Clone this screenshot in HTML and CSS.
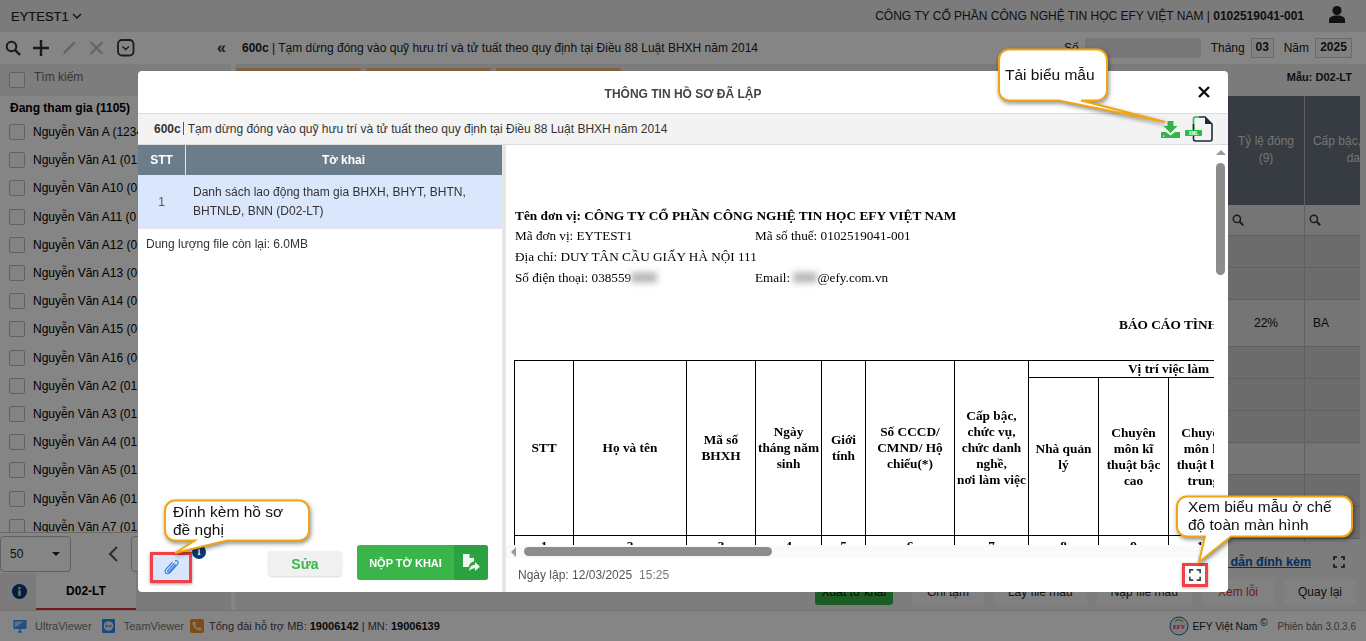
FILE: index.html
```html
<!DOCTYPE html>
<html lang="vi">
<head>
<meta charset="utf-8">
<title>Thông tin hồ sơ đã lập</title>
<link rel="stylesheet" href="styles.css">
</head>
<body>
<div class="app">
  <header class="topbar">
    <div class="unit">EYTEST1
      <svg class="chev" width="10" height="6" viewBox="0 0 10 6"><path d="M1 1l4 4 4-4" fill="none" stroke="#222" stroke-width="1.4"/></svg>
    </div>
    <div class="company">CÔNG TY CỔ PHẦN CÔNG NGHỆ TIN HỌC EFY VIỆT NAM | <b>0102519041-001</b></div>
    <svg class="user" width="16" height="17" viewBox="0 0 16 17"><circle cx="8" cy="4.5" r="4.5" fill="#222"/><path d="M0 17v-3c0-3 3-4.500 8-4.500s8 1.500 8 4.500v3z" fill="#222"/></svg>
  </header>

  <div class="workspace">
    <aside class="sidebar">
      <div class="tools">
        <svg width="16" height="16" viewBox="0 0 16 16"><circle cx="6.500" cy="6.500" r="4.800" fill="none" stroke="#333" stroke-width="2"/><path d="M10 10l5 5" stroke="#333" stroke-width="2.400"/></svg>
        <svg width="16" height="16" viewBox="0 0 16 16"><path d="M8 0v16M0 8h16" stroke="#333" stroke-width="2.400"/></svg>
        <svg width="16" height="16" viewBox="0 0 16 16"><path d="M2 15l1-3.500L13 1.500l1.500 1.500L4.500 13z" fill="#bcbcbc"/></svg>
        <svg width="16" height="16" viewBox="0 0 16 16"><path d="M1.500 2l12 12M13.500 2l-12 12" stroke="#bcbcbc" stroke-width="2"/></svg>
        <svg width="18" height="18" viewBox="0 0 18 18"><rect x="1" y="1" width="15.500" height="15.500" rx="4" fill="none" stroke="#333" stroke-width="1.800"/><path d="M5.500 7.500l3.200 3 3.200-3" fill="none" stroke="#333" stroke-width="1.600"/></svg>
        <span class="collapse">«</span>
      </div>
      <div class="search"><span class="check"></span><span class="search-label">Tìm kiếm</span></div>
      <div class="group">Đang tham gia (1105)</div>
      <ul class="people">
        <li><span class="check"></span>Nguyễn Văn A (1234</li>
        <li><span class="check"></span>Nguyễn Văn A1 (01</li>
        <li><span class="check"></span>Nguyễn Văn A10 (0</li>
        <li><span class="check"></span>Nguyễn Văn A11 (0</li>
        <li><span class="check"></span>Nguyễn Văn A12 (0</li>
        <li><span class="check"></span>Nguyễn Văn A13 (0</li>
        <li><span class="check"></span>Nguyễn Văn A14 (0</li>
        <li><span class="check"></span>Nguyễn Văn A15 (0</li>
        <li><span class="check"></span>Nguyễn Văn A16 (0</li>
        <li><span class="check"></span>Nguyễn Văn A2 (01</li>
        <li><span class="check"></span>Nguyễn Văn A3 (01</li>
        <li><span class="check"></span>Nguyễn Văn A4 (01</li>
        <li><span class="check"></span>Nguyễn Văn A5 (01</li>
        <li><span class="check"></span>Nguyễn Văn A6 (01</li>
        <li><span class="check"></span>Nguyễn Văn A7 (01</li>
      </ul>
      <div class="pager">
        <div class="page-size">50<i class="caret"></i></div>
        <svg class="page-prev" width="10" height="16" viewBox="0 0 10 16"><path d="M9 1L2 8l7 7" fill="none" stroke="#555" stroke-width="2"/></svg>
        <div class="page-box"></div>
      </div>
      <div class="side-tabs">
        <svg class="tab-info" width="15" height="15" viewBox="0 0 15 15"><circle cx="7.500" cy="7.500" r="7.500" fill="#0b3a78"/><rect x="6.300" y="6.300" width="2.400" height="5.500" fill="#ddd"/><rect x="6.300" y="3" width="2.400" height="2.200" fill="#ddd"/></svg>
        <div class="tab-active">D02-LT</div>
      </div>
    </aside>

    <main class="content">
      <div class="headline">
        <div class="headline-title"><b>600c</b> | Tạm dừng đóng vào quỹ hưu trí và tử tuất theo quy định tại Điều 88 Luật BHXH năm 2014</div>
        <label class="field-label">Số</label><span class="field-wide"></span>
        <label class="field-label gap">Tháng</label><span class="field-box month">03</span>
        <label class="field-label gap">Năm</label><span class="field-box year">2025</span>
      </div>
      <div class="chips">
        <span class="chip"></span><span class="chip"></span><span class="chip"></span>
        <b class="form-name">Mẫu: D02-LT</b>
      </div>
      <div class="grid-area">
        <div class="grid-spacer"></div>
        <div class="grid-col">
          <div class="grid-head">Tỷ lệ đóng<br>(9)</div>
          <div class="grid-filter"><svg width="12" height="12" viewBox="0 0 16 16"><circle cx="6.500" cy="6.500" r="4.800" fill="none" stroke="#333" stroke-width="2"/><path d="M10 10l5 5" stroke="#333" stroke-width="2.400"/></svg></div>
          <div class="grid-row"></div>
          <div class="grid-row"></div>
          <div class="grid-row tall">22%</div>
          <div class="grid-row"></div>
          <div class="grid-row"></div>
          <div class="grid-row"></div>
          <div class="grid-row light"></div>
          <div class="grid-row"></div>
          <div class="grid-row"></div>
        </div>
        <div class="grid-col wide">
          <div class="grid-head"><span class="head-wide">Cấp bậc, chức vụ<br>danh</span></div>
          <div class="grid-filter"><svg width="12" height="12" viewBox="0 0 16 16"><circle cx="6.500" cy="6.500" r="4.800" fill="none" stroke="#333" stroke-width="2"/><path d="M10 10l5 5" stroke="#333" stroke-width="2.400"/></svg></div>
          <div class="grid-row"></div>
          <div class="grid-row"></div>
          <div class="grid-row tall left">BA</div>
          <div class="grid-row"></div>
          <div class="grid-row"></div>
          <div class="grid-row"></div>
          <div class="grid-row light"></div>
          <div class="grid-row"></div>
          <div class="grid-row"></div>
        </div>
        <div class="grid-strip"></div>
      </div>
      <div class="attach-row">
        <a class="attach-link">Hướng dẫn đính kèm</a>
        <svg class="fs-mini" width="12" height="12" viewBox="0 0 12 12"><path d="M1 4V1h3M8 1h3v3M11 8v3H8M4 11H1V8" fill="none" stroke="#222" stroke-width="1.600"/></svg>
      </div>
      <div class="actions">
        <button class="act green">Xuất tờ khai</button>
        <button class="act">Ghi tạm</button>
        <button class="act">Lấy file mẫu</button>
        <button class="act">Nạp file mẫu</button>
        <button class="act red">Xem lỗi</button>
        <button class="act">Quay lại</button>
      </div>
    </main>
  </div>

  <footer class="statusbar">
    <svg width="14" height="14" viewBox="0 0 14 14"><rect x="0.500" y="1" width="13" height="9" fill="#3a9aff"/><path d="M2 8.500L11 2.500H2z" fill="#bcd8f8"/><path d="M5 13h4M7 10v3" stroke="#3a9aff" stroke-width="1.500"/></svg>
    <span class="st-a">UltraViewer</span>
    <svg width="13" height="14" viewBox="0 0 13 14"><rect width="13" height="14" rx="1" fill="#2f8cf0"/><circle cx="6.500" cy="7" r="4.800" fill="#eee"/><path d="M3 7l1.800-1.500v1h3.400v-1L10 7 8.200 8.500v-1H4.800v1z" fill="#2f8cf0"/></svg>
    <span class="st-b">TeamViewer</span>
    <svg width="14" height="14" viewBox="0 0 14 14"><rect width="14" height="14" rx="2" fill="#f59028"/><path d="M3.500 2.500l2 .5.500 2.500-1 1c.7 1.300 1.500 2 2.700 2.700l1-1 2.300.6.500 1.900c-1 1-2.500 1-4 .2C5 9.600 3.600 8.200 2.800 6 2.300 4.600 2.600 3.300 3.500 2.500z" fill="#f5eee0"/></svg>
    <span class="st-2">Tổng đài hỗ trợ MB: <b>19006142</b> | MN: <b>19006139</b></span>
    <span class="st-right">
      <svg width="20" height="20" viewBox="0 0 20 20"><circle cx="10" cy="10" r="9" fill="#eee" stroke="#1f5fb0" stroke-width="1"/><path d="M6 5.500c2.500-2 5.500-2 8 0" fill="none" stroke="#40b050" stroke-width="1.200"/><text x="10" y="12.500" text-anchor="middle" class="efy-mark">EFY</text></svg>
      <span class="efy-name">EFY Việt Nam <sup>©</sup></span>
      <span class="version">Phiên bản 3.0.3.6</span>
    </span>
  </footer>
</div>

<div class="overlay"></div>

<section class="modal">
  <div class="modal-title">THÔNG TIN HỒ SƠ ĐÃ LẬP
    <svg class="close" width="12" height="12" viewBox="0 0 12 12"><path d="M1 1l10 10M11 1L1 11" stroke="#111" stroke-width="2.400"/></svg>
  </div>
  <div class="modal-sub">
    <span class="sub-text"><b>600c</b><i class="sub-sep"></i>Tạm dừng đóng vào quỹ hưu trí và tử tuất theo quy định tại Điều 88 Luật BHXH năm 2014</span>
    <svg class="dl" width="19" height="17" viewBox="0 0 19 17"><path d="M6.500 0h6v5h4l-7 7-7-7h4z" fill="#37b34a"/><path d="M0 11h5L9.500 14.500 14 11h5V17H0z" fill="#37b34a"/><rect x="2" y="14.500" width="1.500" height="1.200" fill="#dff"/></svg>
    <svg class="xml" width="28" height="28" viewBox="0 0 28 28"><path d="M14 2h6l7 7v15a2 2 0 0 1-2 2H10.500a2 2 0 0 1-2-2v-3" fill="none" stroke="#1e2a3a" stroke-width="1.600"/><path d="M20 2v7h7z" fill="#1e2a3a"/><path d="M8.500 15V3.500a1.500 1.500 0 0 1 1.500-1.500h4" fill="none" stroke="#37b34a" stroke-width="1.600"/><path d="M8.500 9v6" stroke="#1e2a3a" stroke-width="1.600"/><rect x="0" y="15" width="17" height="6" rx="1" fill="#20c040"/><text x="8.500" y="20" text-anchor="middle" class="xml-mark">XML</text></svg>
  </div>
  <div class="modal-body">
    <div class="left-pane">
      <div class="list-head"><div class="h-stt">STT</div><div class="h-form">Tờ khai</div></div>
      <div class="list-row"><div class="r-stt">1</div><div class="r-form">Danh sách lao động tham gia BHXH, BHYT, BHTN, BHTNLĐ, BNN (D02-LT)</div></div>
      <div class="quota">Dung lượng file còn lại: 6.0MB</div>
      <div class="left-foot">
        <button class="clip">
          <svg width="17" height="17" viewBox="0 0 18 18"><path d="M12.500 2.500c1.300-1.200 3-.8 3.400.5.400 1 0 2.100-.8 3l-7.300 7.800c-1.700 1.800-3.600 2.200-4.800 1.200-1.200-1.100-.8-3 .7-4.700l6.300-6.900M12 4.500l-6.500 7.200c-.7.800-.8 1.500-.4 1.900.5.400 1.200.1 1.900-.6l6.500-7.200" fill="none" stroke="#2f7be8" stroke-width="1.200"/></svg>
        </button>
        <span class="badge">1</span>
        <button class="edit">Sửa</button>
        <button class="submit"><span class="submit-text">NỘP TỜ KHAI</span><span class="submit-icon">
          <svg width="18" height="19" viewBox="0 0 18 19"><path d="M1 1h6.500L12 5v3.500c-2.700.3-4.500 2-5.200 5.500H1z" fill="#eef8ee"/><path d="M7.500 1v4H12z" fill="#2ba23f"/><path d="M7 18c.4-3.700 2.500-6 6-6.200V9l5 4.700-5 4.300v-2.800c-2.500 0-4.300.8-6 2.800z" fill="#eef8ee"/></svg>
        </span></button>
      </div>
    </div>

    <div class="preview">
      <div class="preview-main">
        <div class="doc">
          <div class="doc-inner">
            <p class="doc-name">Tên đơn vị: CÔNG TY CỔ PHẦN CÔNG NGHỆ TIN HỌC EFY VIỆT NAM</p>
            <div class="doc-line"><span class="doc-cell">Mã đơn vị: EYTEST1</span><span>Mã số thuế: 0102519041-001</span></div>
            <div class="doc-line">Địa chỉ: DUY TÂN CẦU GIẤY HÀ NỘI 111</div>
            <div class="doc-line"><span class="doc-cell">Số điện thoại: 038559<i class="blur"></i></span><span>Email: <i class="blur short"></i>@efy.com.vn</span></div>
            <div class="doc-report">BÁO CÁO TÌNH HÌNH SỬ DỤNG LAO ĐỘNG</div>
            <table class="doc-table">
              <colgroup><col class="c59"><col class="c113"><col class="c69"><col class="c66"><col class="c44"><col class="c89"><col class="c74"><col class="c70"><col class="c70"><col class="c70"><col class="c70"></colgroup>
              <tr class="tr-a">
                <th rowspan="2">STT</th><th rowspan="2">Họ và tên</th><th rowspan="2">Mã số<br>BHXH</th><th rowspan="2">Ngày<br>tháng năm<br>sinh</th><th rowspan="2">Giới<br>tính</th><th rowspan="2">Số CCCD/<br>CMND/ Hộ<br>chiếu(*)</th><th rowspan="2">Cấp bậc,<br>chức vụ,<br>chức danh<br>nghề,<br>nơi làm việc</th><th colspan="4">Vị trí việc làm</th>
              </tr>
              <tr class="tr-b">
                <th>Nhà quản<br>lý</th><th>Chuyên<br>môn kĩ<br>thuật bậc<br>cao</th><th>Chuyên<br>môn kĩ<br>thuật bậc<br>trung</th><th>Khác</th>
              </tr>
              <tr class="tr-c"><th>1</th><th>2</th><th>3</th><th>4</th><th>5</th><th>6</th><th>7</th><th>8</th><th>9</th><th>10</th><th>11</th></tr>
            </table>
          </div>
        </div>
        <div class="vscroll"><i class="arrow-up"></i><i class="v-thumb"></i></div>
      </div>
      <div class="hscroll"><i class="arrow-left"></i><i class="h-thumb"></i></div>
      <div class="preview-foot">
        <span>Ngày lập: 12/03/2025</span><span class="time">15:25</span>
        <button class="full">
          <svg width="12" height="12" viewBox="0 0 14 14"><path d="M1 5V1h4M9 1h4v4M13 9v4H9M5 13H1V9" fill="none" stroke="#444" stroke-width="2"/></svg>
        </button>
      </div>
    </div>
  </div>
</section>

<div class="callout c-download">
  <svg class="bubble" width="186" height="84" viewBox="0 0 186 84"><path d="M12 1.500h88a10 10 0 0 1 10 10v31a10 10 0 0 1-10 10H84L168 74 62 52.500H12a10 10 0 0 1-10-10v-31a10 10 0 0 1 10-10z" fill="#fff" stroke="#f0a513" stroke-width="2"/></svg>
  <span class="callout-text">Tải biểu mẫu</span>
</div>
<div class="callout c-attach">
  <svg class="bubble" width="150" height="60" viewBox="0 0 150 60"><path d="M12 1.500h124a10 10 0 0 1 10 10v20a10 10 0 0 1-10 10H64L12 54l20-12.500H12a10 10 0 0 1-10-10v-20a10 10 0 0 1 10-10z" fill="#fff" stroke="#f0a513" stroke-width="2"/></svg>
  <span class="callout-text">Đính kèm hồ sơ<br>đề nghị</span>
</div>
<div class="callout c-full">
  <svg class="bubble" width="180" height="72" viewBox="0 0 180 72"><path d="M12 1.500h155a10 10 0 0 1 10 10v20a10 10 0 0 1-10 10H56L24 67l6-25.500H12a10 10 0 0 1-10-10v-20a10 10 0 0 1 10-10z" fill="#fff" stroke="#f0a513" stroke-width="2"/></svg>
  <span class="callout-text">Xem biểu mẫu ở chế<br>độ toàn màn hình</span>
</div>
</body>
</html>
```
FILE: styles.css
```css
* { box-sizing: border-box; }
html, body { margin: 0; padding: 0; height: 100%; overflow: hidden; }
body { font-family: "Liberation Sans", Arial, sans-serif; font-size: 12px; color: #222; background: #fff; }
button { font-family: inherit; border: 0; padding: 0; }
ul { list-style: none; margin: 0; padding: 0; }

.app { display: flex; flex-direction: column; width: 1366px; height: 641px; overflow: hidden; }

.topbar { flex: 0 0 32px; display: flex; align-items: center; background: #ececec; padding: 0 21px 0 11px; }
.unit { font-size: 13px; -webkit-text-stroke: .2px #222; display: flex; align-items: center; gap: 3px; }
.company { margin-left: auto; font-size: 12px; margin-right: 25px; color: #222; }
.user { margin-top: -4px; }

.workspace { flex: 1; display: flex; min-height: 0; }
.sidebar { flex: 0 0 231px; margin-right: 4px; display: flex; flex-direction: column; background: #fff; }
.tools { height: 32px; flex: none; display: flex; align-items: center; gap: 12px; padding: 0 5px; background: #fff; }
.collapse { margin-left: auto; font-size: 16px; color: #333; font-weight: 700; }
.search { height: 32px; flex: none; display: flex; align-items: center; background: #f0f0f0; padding-left: 9px; }
.search-label { margin-left: 9px; font-size: 12px; margin-top: -6px; color: #666; }
.check { display: inline-block; flex: none; width: 16px; height: 16px; border: 1px solid #bbb; border-radius: 2px; background: #fbfbfb; }
.group { height: 22px; flex: none; padding: 5px 0 0 10px; font-weight: 700; font-size: 12px; line-height: 14px; color: #000; }
.people { flex: 1; min-height: 0; overflow: hidden; background: #fff; }
.people li { height: 28.200px; display: flex; align-items: center; gap: 8px; padding-left: 9px; font-size: 12px; color: #000; white-space: nowrap; }

.pager { height: 41px; flex: none; display: flex; align-items: flex-start; padding: 3px 0 0 0; background: #fff; border-top: 1px solid #ccc; }
.page-size { width: 71px; height: 36px; border: 1px solid #bbb; border-radius: 4px; display: flex; align-items: center; justify-content: space-between; padding: 0 10px 0 9px; font-size: 12px; }
.caret { border: 4px solid transparent; border-top: 4px solid #222; border-bottom: 0; }
.page-prev { margin: 10px 0 0 37px; }
.page-box { width: 30px; height: 36px; border: 1px solid #bbb; border-radius: 4px; margin-left: 13px; }
.side-tabs { height: 37px; flex: none; display: flex; align-items: center; background: #ececec; }
.tab-info { margin: 0 9px 0 12px; }
.tab-active { width: 100px; height: 37px; background: #fff; border-bottom: 2px solid #e03030; display: flex; align-items: center; justify-content: center; font-weight: 700; font-size: 12px; color: #000; }

.content { flex: 1; min-width: 0; display: flex; flex-direction: column; background: #f0f0f0; }
.headline { height: 32px; flex: none; display: flex; align-items: center; padding: 0 14px 0 7px; background: #fff; font-size: 12px; }
.headline-title { flex: 1; font-size: 12px; }
.field-label { font-size: 12px; }
.field-label.gap { margin-left: 10px; margin-right: 6px; }
.field-wide { width: 116px; height: 20px; margin-left: 6px; background: #e4e4e4; border-radius: 2px; }
.field-box { height: 20px; border: 1px solid #ccc; font-weight: 700; font-size: 12px; line-height: 17px; background: #f8f8f8; text-align: center; }
.field-box.month { width: 23px; }
.field-box.year { width: 37px; }
.chips { height: 32px; flex: none; display: flex; align-items: flex-start; gap: 5px; padding: 4px 14px 0 1px; background: #ececec; }
.chip { width: 125px; height: 10px; background: #f5bd80; border-radius: 2px 2px 0 0; }
.form-name { margin-left: auto; margin-top: 3px; font-size: 11px; }

.grid-area { flex: 1; display: flex; min-height: 0; overflow: hidden; }
.grid-spacer { flex: 1; }
.grid-col { width: 77px; flex: none; border-right: 1px solid #b8b8b8; }
.grid-col.wide { width: 55px; overflow: hidden; border-right: 0; }
.grid-strip { width: 6px; flex: none; background: #ececec; }
.grid-head { height: 109px; background: #68747f; color: #ddd; font-size: 12px; line-height: 17px; text-align: center; padding-top: 37px; white-space: nowrap; }
.head-wide { display: block; width: 110px; }
.grid-filter { height: 31px; padding: 9px 0 0 4px; border-bottom: 1px solid #b8b8b8; background: #e0e0e0; }
.grid-row { height: 32px; border-bottom: 1px solid #b8b8b8; background: #d0d0d0; font-size: 12px; }
.grid-row.light { background: #e0e0e0; }
.grid-row.tall { height: 47px; padding-top: 16px; text-align: center; background: #e0e0e0; color: #111; }
.grid-row.left { text-align: left; padding-left: 8px; }

.attach-row { height: 32px; flex: none; display: flex; align-items: center; justify-content: flex-end; gap: 22px; padding: 8px 21px 0 0; }
.attach-link { color: #0a5bb5; text-decoration: underline; font-weight: 700; font-size: 12.500px; }
.actions { height: 36px; flex: none; display: flex; align-items: flex-start; justify-content: flex-end; gap: 10px; padding: 5px 10px 0 0; }
.act { height: 26px; min-width: 72px; padding: 0 14px; background: #f8f8f8; border-radius: 3px; font-size: 12px; color: #222; }
.act.green { width: 78px; min-width: 0; padding: 0; background: #37b34a; color: #111; margin-right: 9px; }
.act.red { color: #e03030; }

.statusbar { flex: 0 0 31px; display: flex; align-items: center; background: #fff; padding: 0 10px 0 13px; border-top: 1px solid #ddd; color: #666; font-size: 11px; }
.st-a { margin: 0 10px 0 8px; color: #777; }
.st-b { margin: 0 6px 0 9px; color: #777; }
.st-2 { margin-left: 5px; color: #444; }
.st-2 b { color: #111; }
.st-right { margin-left: auto; display: flex; align-items: center; gap: 3px; }
.efy-mark { font: 700 6px "Liberation Serif", serif; fill: #e02020; }
.efy-name { color: #222; margin-right: 7px; font-size: 10.300px; }
.efy-name sup { font-size: 10px; line-height: 0; }
.version { color: #666; font-size: 10px; }

.overlay { position: fixed; inset: 0; background: rgba(0, 0, 0, .48); }

.modal { position: fixed; left: 138px; top: 71px; width: 1090px; height: 521px; background: #fff; border-radius: 4px; display: flex; flex-direction: column; overflow: hidden; }
.modal-title { height: 42px; flex: none; display: flex; align-items: center; justify-content: center; padding-top: 3px; font-size: 12px; font-weight: 700; color: #444; position: relative; }
.close { position: absolute; right: 18px; top: 15px; }
.modal-sub { height: 32px; flex: none; display: flex; align-items: center; background: #f3f3f3; border-top: 1px solid #ddd; border-bottom: 1px solid #ddd; padding: 0 15px 0 16px; font-size: 12px; color: #333; }
.sub-text { flex: 1; }
.sub-sep { display: inline-block; width: 1px; height: 13px; background: #555; margin: 0 4px 0 2px; vertical-align: -2px; }
.dl { margin: 1px 5px 0 0; }
.xml { margin-top: -1px; }
.xml-mark { font: 700 4.500px "Liberation Sans", sans-serif; fill: #fff; }

.modal-body { flex: 1; min-height: 0; display: flex; }
.left-pane { width: 364px; flex: none; display: flex; flex-direction: column; }
.list-head { height: 30px; flex: none; display: flex; background: #6b7d8a; color: #fff; font-weight: 700; font-size: 12px; text-align: center; line-height: 30px; }
.h-stt { width: 48px; border-right: 1px solid #e6e6e6; }
.h-form { flex: 1; padding-right: 1px; }
.list-row { height: 54px; flex: none; display: flex; background: #dae6fb; border-bottom: 1px solid #e6e6e6; font-size: 12px; color: #333; }
.r-stt { width: 47px; flex: none; text-align: center; align-self: center; color: #555; }
.r-form { padding: 8px 30px 0 7px; line-height: 19px; border-left: 1px solid #e6e6e6; }
.quota { padding: 8px 0 0 8px; font-size: 12px; color: #333; }
.left-foot { margin-top: auto; height: 47px; display: flex; align-items: flex-start; position: relative; }
.clip { width: 42px; height: 31px; margin: 7px 0 0 12px; background: #d7e6fa; border: 3px solid #f04048; box-shadow: 0 1px 3px rgba(0,0,0,.4); display: flex; align-items: center; justify-content: center; }
.badge { position: absolute; left: 54px; top: 0; width: 14px; height: 14px; border-radius: 50%; background: #0b3a78; color: #fff; font: 700 9px/14px "Liberation Serif", serif; text-align: center; }
.edit { width: 74px; height: 25px; margin: 6px 0 0 76px; background: #f0f0f0; border-radius: 4px; color: #3ab54a; font-weight: 700; font-size: 14px; box-shadow: 0 1px 2px rgba(0,0,0,.15); }
.submit { width: 131px; height: 35px; margin: 0 0 0 15px; display: flex; background: #3ab54a; border-radius: 3px; color: #fff; font-weight: 700; font-size: 11px; overflow: hidden; }
.submit-text { flex: 1; align-self: center; }
.submit-icon { width: 34px; height: 35px; background: #2ba23f; display: flex; align-items: center; justify-content: center; }

.preview { flex: 1; min-width: 0; display: flex; flex-direction: column; border-left: 4px solid #e6e6e6; }
.preview-main { flex: 1; min-height: 0; display: flex; }
.doc { flex: 1; min-width: 0; overflow: hidden; }
.doc-inner { width: 1400px; padding: 63px 0 0 9px; font-family: "Liberation Serif", "Times New Roman", serif; font-size: 13.200px; color: #000; }
.doc-name { margin: 0; font-weight: 700; font-size: 13.330px; line-height: 15px; }
.doc-line { height: 21px; padding-top: 5px; line-height: 15px; }
.doc-cell { display: inline-block; width: 240px; }
.blur { display: inline-block; width: 26px; height: 11px; background: #bbb; filter: blur(3px); vertical-align: -1px; }
.blur.short { width: 24px; }
.doc-report { margin-top: 31px; padding-left: 604px; font-weight: 700; font-size: 13.330px; line-height: 16px; white-space: nowrap; }
.doc-table { margin: 27px 0 0 -1px; width: 744px; table-layout: fixed; border-collapse: collapse; font-size: 13.330px; line-height: 16px; }
.doc-table th { border: 1px solid #000; font-weight: 700; padding: 0; text-align: center; vertical-align: middle; white-space: nowrap; overflow: hidden; }
.c59 { width: 59px; } .c113 { width: 113px; } .c69 { width: 69px; } .c66 { width: 66px; } .c44 { width: 44px; } .c89 { width: 89px; } .c74 { width: 74px; } .c70 { width: 70px; }
.tr-a { height: 17px; }
.tr-b { height: 158px; }
.tr-c { height: 20px; }

.vscroll { width: 14px; flex: none; position: relative; background: #fff; }
.arrow-up { position: absolute; left: 2px; top: 5px; border: 5px solid transparent; border-bottom: 5px solid #999; border-top: 0; }
.v-thumb { position: absolute; left: 2px; top: 18px; width: 9px; height: 112px; border-radius: 5px; background: #8c8c8c; }
.hscroll { height: 13px; flex: none; background: #fafafa; position: relative; }
.arrow-left { position: absolute; left: 5px; top: 2px; border: 5px solid transparent; border-right: 5px solid #999; border-left: 0; }
.h-thumb { position: absolute; left: 18px; top: 2px; width: 248px; height: 9px; border-radius: 5px; background: #8c8c8c; }
.preview-foot { height: 34px; flex: none; display: flex; align-items: center; padding: 0 20px 0 12px; font-size: 12px; color: #555; }
.time { margin-left: 7px; color: #777; }
.full { margin-left: auto; width: 26px; height: 24px; margin-top: -1px; background: #fff; border: 3px solid #f04048; box-shadow: 0 1px 3px rgba(0,0,0,.3); display: flex; align-items: center; justify-content: center; }

.callout { position: fixed; }
.bubble { position: absolute; left: 0; top: 0; overflow: visible; filter: drop-shadow(1px 2px 2px rgba(0,0,0,.45)); }
.callout-text { position: absolute; font-size: 15.500px; line-height: 18px; color: #111; white-space: nowrap; }
.c-download { left: 997px; top: 48px; width: 186px; height: 84px; }
.c-download .callout-text { left: 8px; top: 18px; }
.c-attach { left: 163px; top: 499px; width: 150px; height: 60px; }
.c-attach .callout-text { left: 10px; top: 4px; }
.c-full { left: 1175px; top: 495px; width: 180px; height: 72px; }
.c-full .callout-text { left: 13px; top: 3px; }
```
